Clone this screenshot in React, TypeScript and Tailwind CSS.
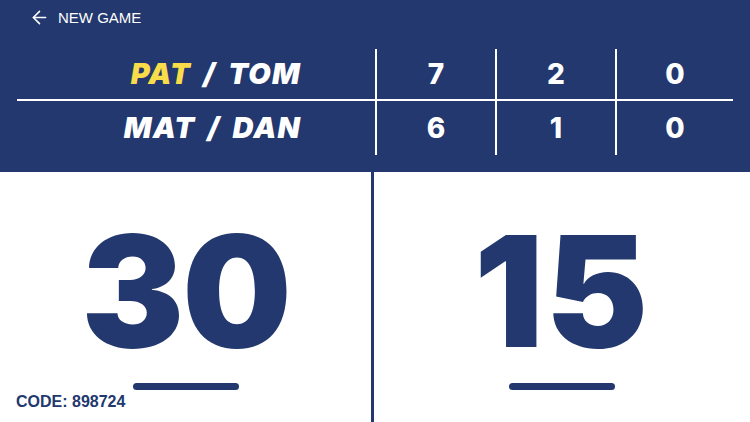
import { ArrowLeft } from 'lucide-react';

const teams = [
  { first: 'PAT', second: 'TOM', serving: true, sets: [7, 2, 0] },
  { first: 'MAT', second: 'DAN', serving: false, sets: [6, 1, 0] },
];

export default function App() {
  return (
    <div className="h-[422px] w-[750px] flex flex-col bg-white overflow-hidden" style={{ fontFamily: 'Inter, sans-serif' }}>
      <div className="h-[172px] bg-[#22386e] flex flex-col">
        <div className="flex items-center h-[34px] pl-[29px] text-white">
          <ArrowLeft size={21} strokeWidth={1.8} />
          <span className="ml-[8px] text-[15px] leading-none" style={{ fontFamily: '"Liberation Sans", Arial, sans-serif' }}>
            NEW GAME
          </span>
        </div>
        <div className="mt-[15px] ml-[17px] w-[716px] flex flex-col">
          {teams.map((t, i) => (
            <div
              key={t.first}
              className={`flex ${i === 0 ? 'h-[52px] border-b-2 border-white' : 'h-[54px]'}`}
            >
              <div className="w-[358px] flex items-center justify-end pr-[74px] text-[29px] font-black italic text-white tracking-[1.2px]">
                <span className={t.serving ? 'text-[#f9dc4a]' : ''}>{t.first}</span>
                <span className="mx-[12px]">/</span>
                <span>{t.second}</span>
              </div>
              {t.sets.map((s, j) => (
                <div
                  key={j}
                  className={`${j === 2 ? 'w-[118px]' : 'w-[120px]'} border-l-2 border-white flex items-center justify-center text-[28px] font-extrabold text-white`}
                >
                  {s}
                </div>
              ))}
            </div>
          ))}
        </div>
      </div>
      <div className="flex-1 flex">
        <div className="w-[371px] flex flex-col items-center">
          <div className="mt-[42px] text-[154px] leading-none font-black text-[#22386e] tracking-[-2px]">30</div>
          <div className="mt-[15px] w-[106px] h-[7px] rounded-full bg-[#22386e]" />
          <div className="self-start pl-[16px] mt-[4px] text-[16px] leading-none font-bold text-[#22386e]" style={{ fontFamily: '"Liberation Sans", Arial, sans-serif' }}>
            CODE: 898724
          </div>
        </div>
        <div className="w-[3px] bg-[#22386e]" />
        <div className="flex-1 flex flex-col items-center">
          <div className="mt-[42px] text-[154px] leading-none font-black text-[#22386e] tracking-[2px]">15</div>
          <div className="mt-[15px] w-[106px] h-[7px] rounded-full bg-[#22386e]" />
        </div>
      </div>
    </div>
  );
}
